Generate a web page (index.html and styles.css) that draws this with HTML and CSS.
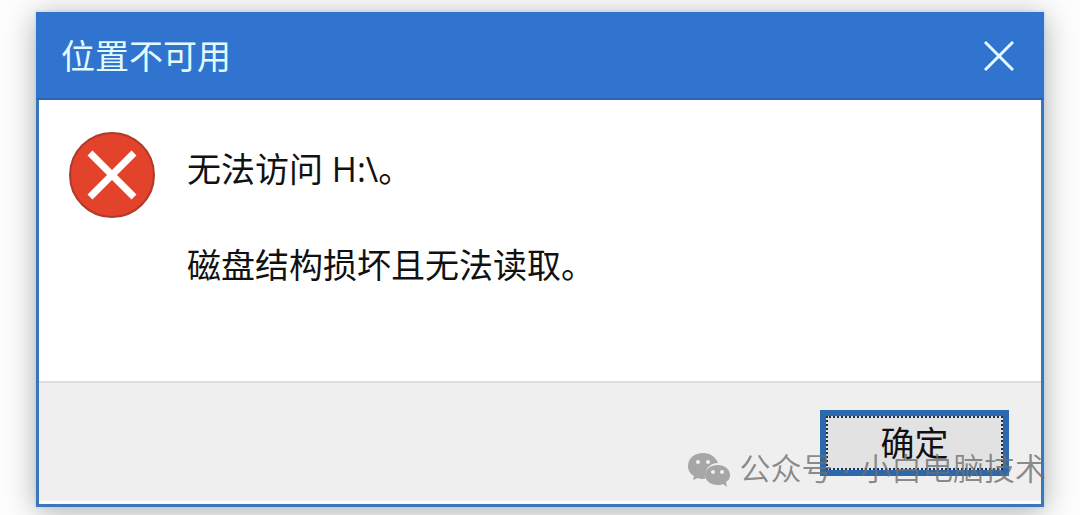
FILE: index.html
```html
<!DOCTYPE html>
<html lang="zh-CN">
<head>
  <meta charset="UTF-8" />
  <meta name="viewport" content="width=device-width, initial-scale=1" />
  <title>位置不可用</title>
  <link rel="stylesheet" href="styles.css">
</head>
<body>

<div class="dialog" role="alertdialog" aria-labelledby="dialogTitle" aria-describedby="dialogText">
  <div class="titlebar">
    <h1 id="dialogTitle">位置不可用</h1>
    <button class="close" type="button" aria-label="关闭">
      <svg viewBox="0 0 30 30" width="30" height="30"><path d="M1 1L29 29M29 1L1 29" /></svg>
    </button>
  </div>

  <div class="content">
    <svg class="error-icon" viewBox="0 0 88 88" width="88" height="88">
      <circle cx="44" cy="44" r="42" />
      <path d="M22 22L66 66M66 22L22 66" />
    </svg>
    <div class="message" id="dialogText">
      <p>无法访问 H:\。</p>
      <p>磁盘结构损坏且无法读取。</p>
    </div>
  </div>

  <div class="footer">
    <button class="ok" type="button">确定</button>
  </div>

  <div class="watermark">
    <svg viewBox="0 0 42 36" width="42" height="36">
      <path d="M15 1C7 1 0 6 0 14C0 18 2 22 6 24L5 28L10 26C12 27 14 27 17 27C16 17 22 11 30 11C28 5 22 1 15 1Z" />
      <path d="M30 13C23 13 17 17 17 23C17 29 23 33 30 33C32 33 33 33 35 32L39 35L38 30C41 28 42 26 42 23C42 17 36 13 30 13Z" />
      <g class="eyes">
        <circle cx="10" cy="10" r="2" />
        <circle cx="20" cy="10" r="2" />
        <circle cx="25" cy="20" r="2" />
        <circle cx="34" cy="20" r="2" />
      </g>
    </svg>
    <span>公众号 · 小白电脑技术</span>
  </div>
</div>

</body>
</html>
```

FILE: styles.css
```css
* {
  box-sizing: border-box;
}

body {
  font-family: "Open Sans", "Noto Sans CJK SC", sans-serif;
  background-color: #fdfdfd;
  margin: 0;
  padding: 12px 36px 8px;
  color: #111;
}

.dialog {
  position: relative;
  background-color: #fff;
  border: 3px solid #3b77b8;
  border-top-width: 0;
  box-shadow: 0 0 3px #a9d0f0, 0 4px 28px rgba(0, 0, 0, 0.32);
}

.titlebar {
  display: flex;
  align-items: center;
  justify-content: space-between;
  height: 88px;
  margin: 0 -3px;
  padding: 2px 30px 0 25px;
  background-color: #3174d0;
  border-bottom: 2px solid #2a65b5;
}

h1 {
  margin: 0;
  font-size: 34px;
  font-weight: 400;
  line-height: 48px;
  color: #e2fbff;
}

.close {
  display: flex;
  padding: 0;
  border: 0;
  background: none;
}

.close path {
  stroke: #e2fbff;
  stroke-width: 3;
}

.content {
  display: flex;
  gap: 31px;
  height: 281px;
  padding: 31px 29px;
}

.error-icon {
  flex: none;
}

.error-icon circle {
  fill: #e3432b;
  stroke: #b03a2a;
  stroke-width: 2;
}

.error-icon path {
  stroke: #fff;
  stroke-width: 7;
}

.message p {
  margin: 14px 0 48px;
  font-size: 34px;
  line-height: 48px;
}

.footer {
  display: flex;
  justify-content: flex-end;
  padding: 27px 32px 25px;
  background-color: #efefef;
  border-top: 2px solid #dedede;
  border-bottom: 3px solid #fafafa;
}

.ok {
  width: 189px;
  height: 66px;
  padding: 0;
  border: 6px solid #2b68ae;
  outline: 2px dotted #16304f;
  outline-offset: -8px;
  background-color: #e2e2e2;
  font-family: inherit;
  font-size: 34px;
  line-height: 48px;
  color: #111;
}

/* account mark lies over the button and the frame */
.watermark {
  position: absolute;
  right: -5px;
  bottom: 12px;
  display: flex;
  align-items: center;
  gap: 9px;
  font-family: "Liberation Sans", "Noto Sans CJK SC", sans-serif;
  font-size: 31px;
  font-weight: 350;
  line-height: 44px;
  color: rgba(110, 110, 110, 0.8);
  white-space: nowrap;
}

.watermark svg {
  fill: #a6a6a6;
}

.watermark .eyes {
  fill: #efefef;
}
```
